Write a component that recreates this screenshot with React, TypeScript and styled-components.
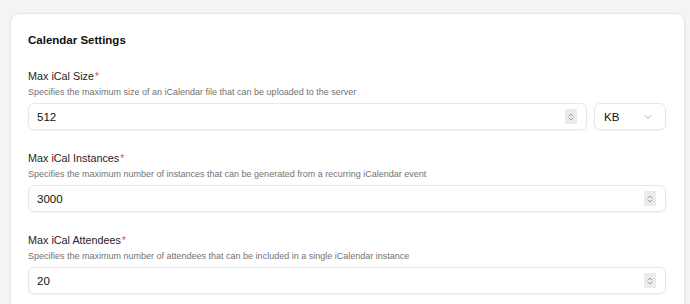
import React from "react";
import styled, { createGlobalStyle } from "styled-components";
import { ChevronDown, ChevronUp } from "lucide-react";

interface FieldProps {
  id: string;
  label: string;
  description: string;
  value: string;
  unit?: string;
}

const fields: FieldProps[] = [
  {
    id: "size",
    label: "Max iCal Size",
    description:
      "Specifies the maximum size of an iCalendar file that can be uploaded to the server",
    value: "512",
    unit: "KB"
  },
  {
    id: "instances",
    label: "Max iCal Instances",
    description:
      "Specifies the maximum number of instances that can be generated from a recurring iCalendar event",
    value: "3000"
  },
  {
    id: "attendees",
    label: "Max iCal Attendees",
    description:
      "Specifies the maximum number of attendees that can be included in a single iCalendar instance",
    value: "20"
  }
];

const GlobalStyle = createGlobalStyle`
  html, body {
    margin: 0;
    padding: 0;
    background: #f3f4f6;
    font-family: "Liberation Sans", Arial, sans-serif;
    overflow: hidden;
  }
`;

const Page = styled.div`
  height: 304px;
  padding: 13px 5px 0 10px;
  box-sizing: border-box;
`;

const Card = styled.section`
  background: #ffffff;
  border: 1px solid #e5e7eb;
  border-bottom: none;
  border-radius: 9px 9px 0 0;
  box-shadow: 0 1px 3px rgba(0, 0, 0, 0.06);
  padding: 17px 18px 0 17px;
  height: 100%;
  box-sizing: border-box;
`;

const Title = styled.h2`
  margin: 0 0 18px;
  font-size: 11.5px;
  line-height: 19px;
  font-weight: 700;
  color: #111111;
`;

const Field = styled.div`
  display: flex;
  flex-direction: column;

  & + & {
    margin-top: 20px;
  }
`;

const Label = styled.label`
  height: 16px;
  font-size: 10.8px;
  line-height: 16px;
  color: #1f2328;
`;

const Required = styled.span`
  color: #ef4444;
  margin-left: 1px;
  font-size: 10px;
  line-height: 0;
`;

const Description = styled.p`
  margin: 2px 0 5px;
  font-size: 9px;
  line-height: 12px;
  color: #737373;
`;

const Row = styled.div`
  display: flex;
  gap: 7px;
`;

const InputBox = styled.div`
  flex: 1;
  height: 27px;
  box-sizing: border-box;
  display: flex;
  align-items: center;
  border: 1px solid #e5e7eb;
  border-radius: 6px;
  box-shadow: 0 1px 2px rgba(0, 0, 0, 0.06);
  padding: 0 9px 0 8px;
`;

const Input = styled.input`
  flex: 1;
  min-width: 0;
  border: none;
  outline: none;
  padding: 0;
  background: transparent;
  font-family: inherit;
  font-size: 11.5px;
  color: #111111;
`;

const Spinner = styled.span`
  width: 12px;
  height: 15px;
  background: #ebebed;
  display: flex;
  flex-direction: column;
  align-items: center;
  justify-content: center;
  color: #6b7280;
`;

const Select = styled.div`
  width: 72px;
  height: 27px;
  box-sizing: border-box;
  display: flex;
  align-items: center;
  justify-content: space-between;
  border: 1px solid #e5e7eb;
  border-radius: 6px;
  box-shadow: 0 1px 2px rgba(0, 0, 0, 0.06);
  padding: 0 11px 0 9px;
  font-size: 11.5px;
  color: #111111;
`;

const SelectArrow = styled(ChevronDown)`
  color: #8b919b;
`;

const NumberInput = ({ value }: { value: string }) => (
  <InputBox>
    <Input defaultValue={value} />
    <Spinner>
      <ChevronUp size={8} strokeWidth={2} style={{ marginBottom: -2 }} />
      <ChevronDown size={8} strokeWidth={2} style={{ marginTop: -2 }} />
    </Spinner>
  </InputBox>
);

const App = () => (
  <>
    <GlobalStyle />
    <Page>
      <Card>
        <Title>Calendar Settings</Title>
        {fields.map(field => (
          <Field key={field.id}>
            <Label>
              {field.label}
              <Required>*</Required>
            </Label>
            <Description>{field.description}</Description>
            <Row>
              <NumberInput value={field.value} />
              {field.unit && (
                <Select>
                  {field.unit}
                  <SelectArrow size={12} strokeWidth={1.5} />
                </Select>
              )}
            </Row>
          </Field>
        ))}
      </Card>
    </Page>
  </>
);

export default App;
